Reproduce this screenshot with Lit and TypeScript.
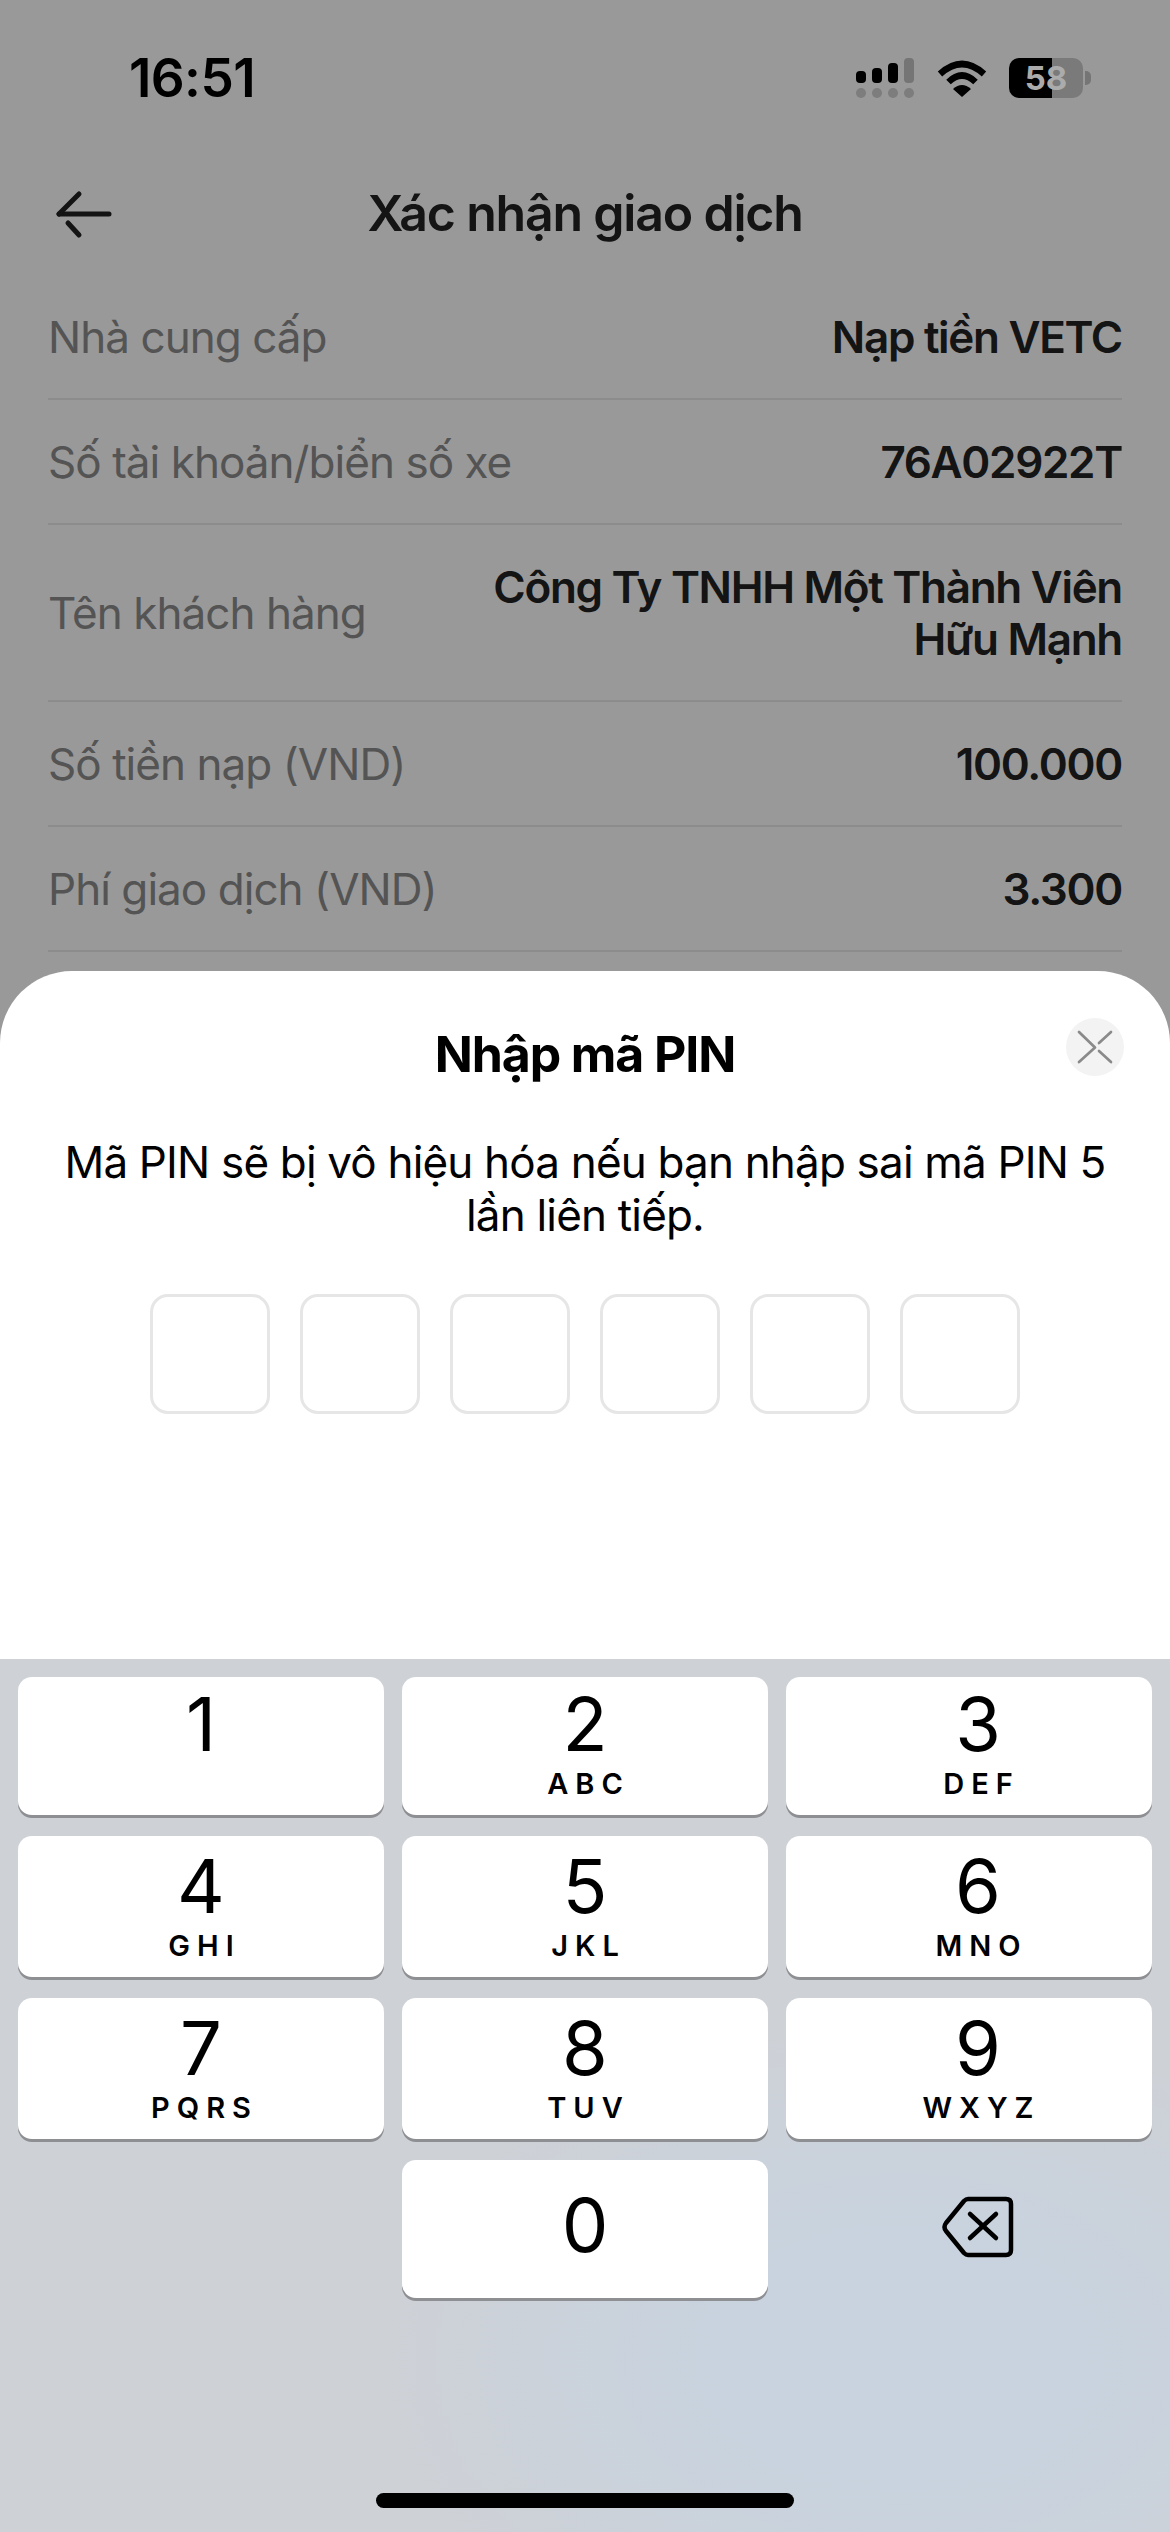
import { LitElement, html, css } from "lit";
import { customElement } from "lit/decorators.js";

const ROWS: { label: string; value: string[]; tall?: boolean }[] = [
  { label: "Nhà cung cấp", value: ["Nạp tiền VETC"] },
  { label: "Số tài khoản/biển số xe", value: ["76A02922T"] },
  { label: "Tên khách hàng", value: ["Công Ty TNHH Một Thành Viên", "Hữu Mạnh"], tall: true },
  { label: "Số tiền nạp (VND)", value: ["100.000"] },
  { label: "Phí giao dịch (VND)", value: ["3.300"] },
];

const KEYS: [string, string][] = [
  ["1", ""], ["2", "ABC"], ["3", "DEF"],
  ["4", "GHI"], ["5", "JKL"], ["6", "MNO"],
  ["7", "PQRS"], ["8", "TUV"], ["9", "WXYZ"],
];

@customElement("app-root")
export class AppRoot extends LitElement {
  static styles = css`
    :host {
      display: block;
      position: relative;
      width: 1170px;
      height: 2532px;
      overflow: hidden;
      background: #fff;
      font-family: Inter, "Liberation Sans", sans-serif;
      color: #222;
    }
    .status {
      height: 156px;
      display: flex;
      align-items: center;
      justify-content: space-between;
      padding: 0 79px 0 129px;
      box-sizing: border-box;
    }
    .time { font-size: 53px; font-weight: 600; color: #000; letter-spacing: -0.6px; }
    .status-icons { display: flex; align-items: center; }
    .signal { width: 58px; height: 40px; display: block; margin-right: 23px; }
    .wifi { width: 50px; height: 37px; display: block; margin-right: 22px; }
    .battery {
      position: relative;
      z-index: 1;
      width: 74px;
      height: 40px;
      border-radius: 10px;
      background: linear-gradient(90deg, #000 0 43px, #7a7a7a 43px);
      display: flex;
      align-items: center;
      justify-content: center;
      font-size: 33px;
      font-weight: 700;
      color: #ababab;
    }
    .nub { width: 6px; height: 14px; margin-left: 2px; border-radius: 0 5px 5px 0; background: #c4c4c4; }
    .header {
      height: 119px;
      display: flex;
      align-items: center;
      justify-content: center;
      position: relative;
    }
    .back { position: absolute; left: 48px; top: 29px; width: 70px; height: 60px; }
    .title { font-size: 50px; font-weight: 600; letter-spacing: -1.2px; margin-bottom: 5px; }
    .rows { padding: 0 48px; }
    .row {
      height: 123px;
      display: flex;
      align-items: center;
      justify-content: space-between;
      border-bottom: 2px solid #e9e9e9;
    }
    .row.tall { height: 175px; }
    .label { font-size: 44px; letter-spacing: -0.95px; color: #8c8c8c; }
    .value { font-size: 44px; font-weight: 600; letter-spacing: -1.3px; line-height: 52px; text-align: right; }
    .scrim { position: absolute; inset: 0; background: rgba(0, 0, 0, 0.4); }
    .sheet {
      position: absolute;
      left: 0;
      right: 0;
      top: 971px;
      bottom: 0;
      display: flex;
      flex-direction: column;
      border-radius: 72px 72px 0 0;
      overflow: hidden;
      background: #fff;
    }
    .panel {
      height: 688px;
      position: relative;
      display: flex;
      flex-direction: column;
      align-items: center;
      color: #000;
    }
    .sheet-title { margin-top: 55px; font-size: 50px; letter-spacing: -1.1px; line-height: 56px; font-weight: 700; }
    .close {
      position: absolute;
      right: 46px;
      top: 47px;
      width: 58px;
      height: 58px;
      border-radius: 50%;
      background: #f3f3f3;
      display: flex;
      align-items: center;
      justify-content: center;
    }
    .close svg { width: 36px; height: 36px; display: block; }
    .desc { margin: 54px 60px 0; font-size: 44px; letter-spacing: -0.82px; line-height: 53px; text-align: center; }
    .pins { margin-top: 52px; display: flex; gap: 30px; }
    .pin {
      width: 120px;
      height: 120px;
      box-sizing: border-box;
      border: 3px solid #e6e6e6;
      border-radius: 18px;
    }
    .keyboard {
      flex: 1;
      padding: 18px 18px 0;
      background:
        radial-gradient(ellipse 520px 340px at 900px 700px, #c8d3df 35%, rgba(200, 211, 223, 0) 100%),
        #ced1d6;
      display: grid;
      grid-template-columns: repeat(3, 366px);
      grid-template-rows: 138px 141px 141px 138px;
      gap: 21px 18px;
      align-content: start;
    }
    .key {
      background: #fff;
      border-radius: 14px;
      box-shadow: 0 3px 0 #8e8f93;
      display: flex;
      flex-direction: column;
      align-items: center;
      color: #000;
    }
    .key.right, .bksp { padding-left: 18px; box-sizing: border-box; }
    .digit { margin-top: 10px; font-size: 74px; line-height: 80px; font-weight: 400; }
    .key.top .digit { margin-top: 7px; }
    .letters { margin: 3px -7px 0 0; font-size: 29px; line-height: 34px; font-weight: 600; letter-spacing: 7px; }
    .key.zero { grid-column: 2; }
    .key.zero .digit { margin-top: 25px; }
    .bksp { grid-column: 3; display: flex; align-items: flex-start; justify-content: center; padding-top: 36px; }
    .bksp svg { width: 72px; height: 62px; display: block; }
    .home {
      position: absolute;
      left: 376px;
      bottom: 24px;
      width: 418px;
      height: 15px;
      border-radius: 8px;
      background: #000;
    }
  `;

  render() {
    return html`
      <div class="status">
        <span class="time">16:51</span>
        <div class="status-icons">
          <svg class="signal" viewBox="0 0 58 40">
            <rect x="0" y="13" width="10" height="12" rx="4" fill="#000" />
            <rect x="16" y="10" width="10" height="15" rx="4" fill="#000" />
            <rect x="32" y="5" width="10" height="20" rx="4" fill="#000" />
            <rect x="48" y="0" width="10" height="25" rx="4" fill="#c4c4c4" />
            <circle cx="5" cy="35" r="5" fill="#d0d0d0" />
            <circle cx="21" cy="35" r="5" fill="#d0d0d0" />
            <circle cx="37" cy="35" r="5" fill="#d0d0d0" />
            <circle cx="53" cy="35" r="5" fill="#d0d0d0" />
          </svg>
          <svg class="wifi" viewBox="0 0 50 37">
            <path d="M3 14 Q25 -6 47 14" fill="none" stroke="#000" stroke-width="6.5" />
            <path d="M11.5 22 Q25 9 38.5 22" fill="none" stroke="#000" stroke-width="6.5" />
            <path d="M16 29 Q25 21 34 29 L25 37 Z" fill="#000" />
          </svg>
          <div class="battery">58</div>
          <div class="nub"></div>
        </div>
      </div>
      <div class="header">
        <svg class="back" viewBox="0 0 70 60" fill="none" stroke="#222" stroke-width="5" stroke-linecap="round">
          <path d="M11 29 H61" />
          <path d="M11 29 L31 9" />
          <path d="M20 38 L31 50" />
        </svg>
        <span class="title">Xác nhận giao dịch</span>
      </div>
      <div class="rows">
        ${ROWS.map(
          (r) => html`<div class="row ${r.tall ? "tall" : ""}">
            <span class="label">${r.label}</span>
            <span class="value">${r.value.map((l) => html`<div>${l}</div>`)}</span>
          </div>`
        )}
      </div>
      <div class="scrim"></div>
      <div class="sheet">
        <div class="panel">
          <div class="sheet-title">Nhập mã PIN</div>
          <div class="close">
            <svg viewBox="0 0 36 36" fill="none" stroke="#8a8a8a" stroke-width="2.7" stroke-linecap="round" stroke-linejoin="round">
              <path d="M2 3 L18 18.5 L2 33" />
              <path d="M34 3 L22 14" />
              <path d="M22 22 L34 33" />
            </svg>
          </div>
          <div class="desc">Mã PIN sẽ bị vô hiệu hóa nếu bạn nhập sai mã PIN 5<br />lần liên tiếp.</div>
          <div class="pins">
            ${[0, 1, 2, 3, 4, 5].map(() => html`<div class="pin"></div>`)}
          </div>
        </div>
        <div class="keyboard">
          ${KEYS.map(
            ([d, l], i) => html`<div class="key ${i % 3 === 2 ? "right" : ""} ${i < 3 ? "top" : ""}">
              <span class="digit">${d}</span>
              <span class="letters">${l}</span>
            </div>`
          )}
          <div class="key zero"><span class="digit">0</span></div>
          <div class="bksp">
            <svg viewBox="0 0 72 62" fill="none" stroke="#000" stroke-width="4.5" stroke-linecap="round" stroke-linejoin="round">
              <path d="M26 3 H64 Q69 3 69 8 V54 Q69 59 64 59 H26 Q24 59 22 57 L4 35 Q1 31 4 27 L22 5 Q24 3 26 3 Z" />
              <path d="M28 18 L54 42" />
              <path d="M54 18 L28 42" />
            </svg>
          </div>
        </div>
      </div>
      <div class="home"></div>
    `;
  }
}
